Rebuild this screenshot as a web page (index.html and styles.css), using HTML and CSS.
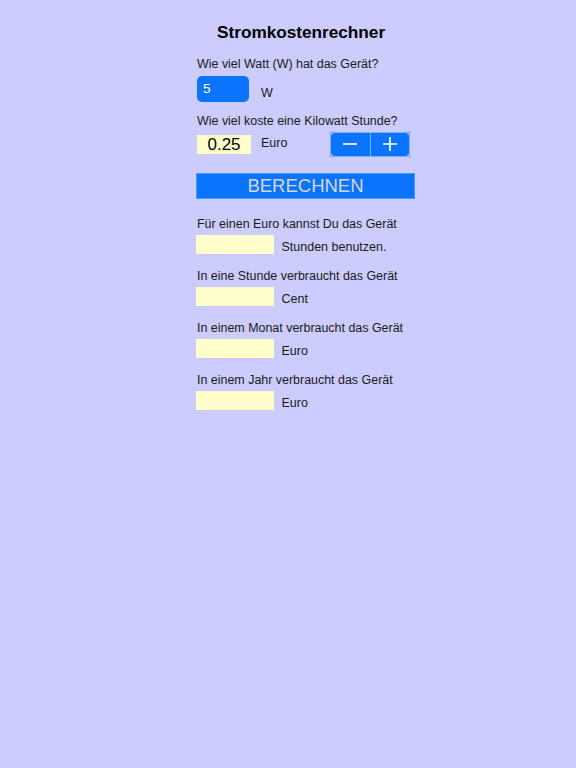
FILE: index.html
```html
<!DOCTYPE html>
<html lang="de">
<head>
<meta charset="utf-8">
<title>Stromkostenrechner</title>
<link rel="stylesheet" href="styles.css">
</head>
<body>
<main class="calc">
  <h1 class="title">Stromkostenrechner</h1>

  <p class="label label-first">Wie viel Watt (W) hat das Gerät?</p>
  <div class="row row-watt">
    <div class="watt-input">5</div>
    <span class="unit unit-watt">W</span>
  </div>

  <p class="label label-price">Wie viel koste eine Kilowatt Stunde?</p>
  <div class="row row-price">
    <div class="price-field">0.25</div>
    <span class="unit unit-price">Euro</span>
    <div class="stepper">
      <button class="step step-minus" aria-label="minus">
        <svg width="14" height="14" viewBox="0 0 14 14"><path d="M0 7H14" stroke="#fff" stroke-width="1.6"/></svg>
      </button>
      <button class="step step-plus" aria-label="plus">
        <svg width="14" height="14" viewBox="0 0 14 14"><path d="M0 7H14M7 0V14" stroke="#fff" stroke-width="1.6"/></svg>
      </button>
      <span class="handle h-tl"></span>
      <span class="handle h-tr"></span>
      <span class="handle h-bl"></span>
      <span class="handle h-br"></span>
    </div>
  </div>

  <button class="calc-button">BERECHNEN</button>

  <section class="result result-first">
    <p class="label">Für einen Euro kannst Du das Gerät</p>
    <div class="row result-row">
      <div class="result-box"></div>
      <span class="unit result-unit">Stunden benutzen.</span>
    </div>
  </section>

  <section class="result">
    <p class="label">In eine Stunde verbraucht das Gerät</p>
    <div class="row result-row">
      <div class="result-box"></div>
      <span class="unit result-unit">Cent</span>
    </div>
  </section>

  <section class="result">
    <p class="label">In einem Monat verbraucht das Gerät</p>
    <div class="row result-row">
      <div class="result-box"></div>
      <span class="unit result-unit">Euro</span>
    </div>
  </section>

  <section class="result">
    <p class="label">In einem Jahr verbraucht das Gerät</p>
    <div class="row result-row">
      <div class="result-box"></div>
      <span class="unit result-unit">Euro</span>
    </div>
  </section>
</main>
</body>
</html>
```

FILE: styles.css
```css
html, body {
  margin: 0;
  padding: 0;
  background: #ccccff;
  height: 100%;
}

body {
  font-family: "Liberation Sans", Arial, sans-serif;
  color: #1a1a1a;
}

.calc {
  margin-left: 196px;
  width: 219px;
  padding-top: 22px;
  display: flex;
  flex-direction: column;
}

.title {
  margin: 0;
  padding-left: 21px;
  font-size: 17.2px;
  line-height: 20px;
  font-weight: bold;
  color: #000;
  white-space: nowrap;
}

.label {
  margin: 0;
  padding-left: 1px;
  font-size: 12.45px;
  line-height: 16px;
  white-space: nowrap;
}

.label-first {
  margin-top: 14px;
}

.row {
  display: flex;
  align-items: flex-start;
}

.unit {
  font-size: 12.5px;
  line-height: 16px;
  white-space: nowrap;
}

.row-watt {
  margin-top: 4px;
}

.watt-input {
  margin-left: 1px;
  width: 52px;
  height: 26px;
  box-sizing: border-box;
  padding-left: 6px;
  background: #0a74ff;
  border-radius: 5px;
  color: #fff;
  font-size: 13.5px;
  line-height: 26px;
}

.unit-watt {
  margin-left: 12px;
  margin-top: 9px;
}

.label-price {
  margin-top: 10.5px;
}

.row-price {
  margin-top: 3px;
  height: 25px;
}

.price-field {
  margin-left: 1px;
  margin-top: 3px;
  width: 54px;
  height: 19px;
  background: #ffffcc;
  color: #000;
  font-size: 17px;
  line-height: 19px;
  text-align: center;
}

.unit-price {
  margin-left: 10px;
  margin-top: 3.5px;
}

.stepper {
  position: relative;
  margin-left: auto;
  margin-right: 5px;
  width: 80px;
  height: 25px;
  box-sizing: border-box;
  display: flex;
  background: #0a74ff;
  border: 1px solid rgba(255, 255, 255, 0.45);
  border-radius: 2px;
}

.step {
  flex: 1;
  margin: 0;
  padding: 0;
  border: 0;
  background: transparent;
  display: flex;
  align-items: center;
  justify-content: center;
}

.step-minus {
  border-right: 1px solid rgba(255, 255, 255, 0.45);
}

.handle {
  position: absolute;
  width: 4px;
  height: 4px;
  border-radius: 50%;
  background: #8fb8ff;
}

.h-tl { left: -2px; top: -2px; }
.h-tr { right: -2px; top: -2px; }
.h-bl { left: -2px; bottom: -2px; }
.h-br { right: -2px; bottom: -2px; }

.calc-button {
  margin: 16px 0 0 0;
  padding: 0;
  width: 219px;
  height: 26px;
  background: #0a74ff;
  border: 1px solid rgba(255, 255, 255, 0.25);
  color: #d6d6d6;
  font-family: "Liberation Sans", Arial, sans-serif;
  font-size: 18.5px;
  line-height: 24px;
  text-align: center;
}

.result {
  margin-top: 14px;
}

.result-first {
  margin-top: 17px;
}

.result-row {
  margin-top: 3.5px;
  height: 18.5px;
}

.result-box {
  width: 78px;
  height: 18.5px;
  background: #ffffcc;
}

.result-unit {
  margin-left: 7.5px;
  margin-top: 4.2px;
}
```
